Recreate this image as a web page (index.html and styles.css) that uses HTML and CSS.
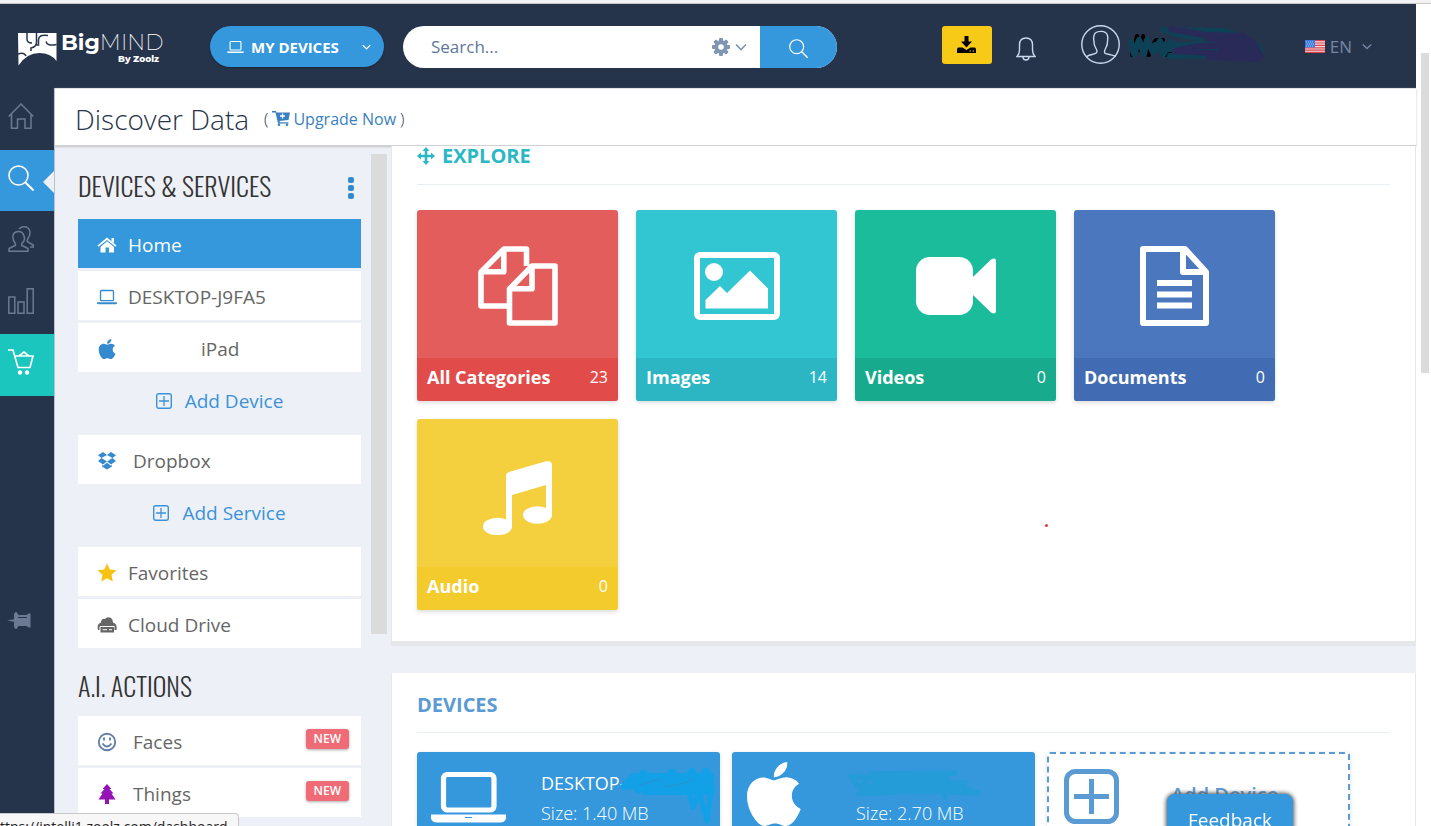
FILE: index.html
```html
<!DOCTYPE html>
<html lang="en">
<head>
<meta charset="utf-8">
<title>BigMIND - Discover Data</title>
<link rel="stylesheet" href="styles.css">
</head>
<body>
<svg class="defs" aria-hidden="true">
  <symbol id="chevron" viewBox="0 0 12 8"><path d="M1 1.5l5 5 5-5" fill="none" stroke="currentColor" stroke-width="1.6"/></symbol>
  <symbol id="laptop" viewBox="0 0 21 15"><rect x="3.7" y=".7" width="13.600" height="10.600" rx="1" fill="none" stroke="currentColor" stroke-width="1.400"/><path d="M0 13h21v1q0 1-2 1H2q-2 0-2-1z" fill="currentColor"/></symbol>
  <symbol id="search" viewBox="0 0 26 26"><circle cx="10.500" cy="10.500" r="9.500" fill="none" stroke="currentColor" stroke-width="1.600"/><path d="M17 17l8.500 8.500" stroke="currentColor" stroke-width="2"/></symbol>
  <symbol id="plusbox" viewBox="0 0 55 55"><rect x="2.500" y="2.500" width="50" height="50" rx="9" fill="none" stroke="currentColor" stroke-width="5"/><path d="M27.500 10v35M10 27.500h35" stroke="currentColor" stroke-width="5"/></symbol>
  <symbol id="plusthin" viewBox="0 0 16 16"><rect x=".7" y=".7" width="14.600" height="14.600" rx="2" fill="none" stroke="currentColor" stroke-width="1.400"/><path d="M8 3v10M3 8h10" stroke="currentColor" stroke-width="1.300"/></symbol>
  <symbol id="apple" viewBox="0 32 380 448"><path fill="currentColor" d="M318.700 268.700c-.2-36.700 16.400-64.400 50-84.800-18.800-26.900-47.200-41.700-84.700-44.600-35.500-2.800-74.300 20.700-88.500 20.700-15 0-49.400-19.700-76.400-19.700C63.300 141.200 4 184.800 4 273.500q0 39.300 14.400 81.200c12.800 36.700 59 126.700 107.200 125.200 25.200-.6 43-17.900 75.800-17.900 31.800 0 48.300 17.900 76.400 17.900 48.600-.7 90.400-82.500 102.600-119.300-65.200-30.700-61.700-90-61.700-91.900zm-56.600-164.200c27.300-32.400 24.800-61.900 24-72.500-24.100 1.400-52 16.400-67.900 34.900-17.500 19.800-27.800 44.300-25.600 71.900 26.100 2 49.900-11.400 69.500-34.300z"/></symbol>
</svg>

<div class="browser-edge"></div>
<div class="window">
  <div class="app">
    <header class="topbar">
      <a class="logo" href="#" aria-label="BigMIND by Zoolz">
        <svg class="logo-mark" viewBox="0 0 39 33" aria-hidden="true">
          <path fill="#fff" d="M0 0h38.500v28q-6-8-17-8-13 0-21 12.500z"/>
          <path d="M9 0v6q0 4 5 4M18.500 0v9q0 5-5.500 6v3M0 21q6-2 8 2M30 2.500q-9-1.500-9.500 4V12h-2M28 8.500q1 5 10.500 3" fill="none" stroke="#26344b" stroke-width="1.500"/>
        </svg>
        <span class="logo-text">
          <span class="logo-name"><b>Big</b>MIND</span>
          <span class="logo-by">By Zoolz</span>
        </span>
      </a>
      <button class="pill" type="button">
        <svg class="i-laptop" aria-hidden="true"><use href="#laptop"/></svg>
        <span>MY DEVICES</span>
        <svg class="chev" aria-hidden="true"><use href="#chevron"/></svg>
      </button>
      <form class="search">
        <input type="text" placeholder="Search..." aria-label="Search">
        <button class="search-opts" type="button" aria-label="Search options">
          <svg class="i-gear" viewBox="-9 -9 18 18" aria-hidden="true"><g fill="currentColor"><g id="tooth"><rect x="-2" y="-9" width="4" height="18" rx="1"/><rect x="-9" y="-2" width="18" height="4" rx="1"/></g><use href="#tooth" transform="rotate(45)"/><circle r="6.700"/></g><circle r="2.800" fill="#fff"/></svg>
          <svg class="chev" aria-hidden="true"><use href="#chevron"/></svg>
        </button>
        <button class="search-go" type="submit" aria-label="Search"><svg aria-hidden="true"><use href="#search"/></svg></button>
      </form>
      <button class="download" type="button" aria-label="Download">
        <svg viewBox="0 0 19 18" aria-hidden="true"><path d="M7.500 0h4v5.500H15l-5.500 6L4 5.500h3.500zM1 11.500h4.500l4 2.500 4-2.500H18l1 1.500v4H0v-4z"/><path d="M12.500 15h1.500M15.500 15h1.500" stroke="#f8ca18" stroke-width="1.200"/></svg>
      </button>
      <button class="bell" type="button" aria-label="Notifications">
        <svg viewBox="0 0 20 24" fill="none" stroke="#c9d7ea" stroke-width="1.400" aria-hidden="true"><path d="M1 19.500q2.500-2.500 2.500-6.500V8q0-7 6.500-7t6.500 7v5q0 4 2.500 6.500zM7 20q0 3 3 3t3-3"/></svg>
      </button>
      <button class="account" type="button" aria-label="Account">
        <svg class="avatar" viewBox="0 0 39 39" fill="none" stroke="#c9d7ea" stroke-width="1.400" aria-hidden="true"><circle cx="19.500" cy="19.500" r="18.700"/><path d="M5.500 32q1-1.500 5.500-2.500 5-1 5-3 0-1.500-1.500-4-1.500-2.500-1.500-6c0-1-1-3 0-6 1-5 12-6 13.500 0 .7 3 0 5 0 6 0 3.500-.5 4-1.500 6-1.500 3-1.500 3-1.500 4 0 2 0 2 5 3 4.500 1 5.500 1 6 2.500"/></svg>
        <svg class="scribble-name" viewBox="0 0 140 38" fill="none" stroke-linecap="round" stroke-linejoin="round" aria-hidden="true">
          <path stroke="#000" stroke-width="4" d="M5 29l5-19 3 14 3-14 5 16 8-12 8 15 12-2M30 14l6 0M22 29l-6-2"/>
          <path stroke="#0f4156" stroke-width="6" d="M4 16l3 12 5-14 5 14 3-14 6 12 7-11 3 14 8-13 5 13 20-12 25 3M36 4l62 1 20 8-60-3-15-4 30 3M28 19h102l4 6-8 8-65-4-18 1 80-2M28 23h60"/>
          <path stroke="#2a2a59" stroke-width="6" d="M44 3l34 6 38 1 12 9 6 12-50-4-36-2 24-5 50-1M80 12l40 5M82 31l48 2-36-9 36 2"/>
        </svg>
      </button>
      <button class="lang" type="button">
        <svg class="flag" viewBox="0 0 20 13" aria-hidden="true"><path fill="#f5dcdc" d="M0 0h20v13H0z"/><path stroke="#d8434e" stroke-width="1.200" d="M0 .6h20M0 3h20M0 5.400h20M0 7.800h20M0 10.200h20M0 12.400h20"/><path fill="#3c7be0" d="M0 0h10v7.500H0z"/><path stroke="#c8defa" stroke-width=".8" stroke-dasharray="1 1" d="M1 2h8M2 4h8M1 6h8"/></svg>
        <span>EN</span>
        <svg class="chev" aria-hidden="true"><use href="#chevron"/></svg>
      </button>
    </header>

    <div class="body">
      <nav class="rail" aria-label="Main">
        <div class="rail-items">
          <a href="#" aria-label="Home"><svg viewBox="0 0 26 26" fill="none" stroke="currentColor" stroke-width="1.500"><path d="M.7 13.500L13 1l12.300 12.500M3.500 11v14.200h6V16h7.500v9.200h6V11"/></svg></a>
          <a href="#" class="active" aria-label="Discover"><svg><use href="#search"/></svg></a>
          <a href="#" aria-label="Contacts"><svg viewBox="0 0 26 26" fill="none" stroke="currentColor" stroke-width="1.500"><path d="M1 25.200v-2.700l6-3q1-.5 0-2.500Q4.500 14 5 10t5-4.500 6 4.500-2 7q-.8 2 0 2.500l6 3v2.700zM11 3q2-2.200 5-2.200 5 0 6 5 .3 4-2.500 7.500-.8 2 .5 2.700l5.300 3v2H22"/></svg></a>
          <a href="#" aria-label="Statistics"><svg viewBox="0 0 26 26" fill="none" stroke="currentColor" stroke-width="1.500"><path d="M.8 9h6v16.200h-6zM10 14h6v11.200h-6zM19.200.8h6v24.400h-6z"/></svg></a>
          <a href="#" class="cart" aria-label="Shop"><svg viewBox="0 0 26 26" fill="none" stroke="currentColor" stroke-width="1.700"><path d="M0 1h5l5 17.500h12L25 7H7M11 7l5-4 5 4"/><g fill="currentColor" stroke="none"><circle cx="12" cy="23.500" r="2.200"/><circle cx="19" cy="23.500" r="2.200"/></g></svg></a>
        </div>
        <button class="pin" type="button" aria-label="Pin menu"><svg viewBox="0 0 24 17"><path fill="currentColor" d="M0 8.500l7-1.300V2l1.500-2 1 0 2 3h8l2-1.500h2v14h-2l-2-1.500h-8l-2 3-1 0L7 15V9.800z"/><path stroke="#26344b" d="M11 5.500h9"/></svg></button>
      </nav>

      <div class="page">
        <div class="titlebar">
          <h1>Discover Data</h1>
          <p class="upgrade">(
            <a href="#"><svg viewBox="0 0 18 15" aria-hidden="true"><path fill="currentColor" d="M0 0h4l.5 1.500H18L16.500 9l-9 1 .3 1.200h8.700v1.300H6L3.500 1.500H0z"/><circle cx="7" cy="13.700" r="1.300" fill="currentColor"/><circle cx="15" cy="13.700" r="1.300" fill="currentColor"/><path stroke="#fff" stroke-width="1.300" d="M10.500 2.500v5M8 5h5"/></svg>Upgrade Now</a>
          )</p>
        </div>

        <div class="columns">
          <aside class="side">
            <div class="side-list">
              <div class="side-head">
                <h2>DEVICES &amp; SERVICES</h2>
                <button class="dots" type="button" aria-label="More"><i></i><i></i><i></i></button>
              </div>
              <ul class="items">
                <li><a class="item selected" href="#"><svg class="ico" viewBox="0 0 20 20" aria-hidden="true"><path fill="currentColor" d="M10 2.500l9.500 8-1 1.200L10 5l-8.500 6.700-1-1.200zM14.500 3H17v5l-2.500-2zM10 6.200l7 5.700V17.500h-5v-5H8.500v5H3.500v-5.600z"/></svg>Home</a></li>
                <li><a class="item" href="#"><svg class="ico blue" aria-hidden="true"><use href="#laptop"/></svg>DESKTOP-J9FA5</a></li>
                <li><a class="item named" href="#"><svg class="ico blue" aria-hidden="true"><use href="#apple"/></svg>iPad</a></li>
              </ul>
              <button class="add" type="button"><svg aria-hidden="true"><use href="#plusthin"/></svg>Add Device</button>
              <ul class="items">
                <li><a class="item wide" href="#"><svg class="ico blue" viewBox="0 0 20 20" aria-hidden="true"><path fill="currentColor" d="M6 1l4 3-5.500 3L1 4.300zM14 1l-4 3 5.500 3L19 4.300zM1 10l3.500-3L10 10.500 6 13.500zM19 10l-3.500-3L10 10.500l4 3zM5 14l1 .7 4-3 4 3 1-.7v1.500l-5 3-5-3z"/></svg>Dropbox</a></li>
              </ul>
              <button class="add" type="button"><svg aria-hidden="true"><use href="#plusthin"/></svg>Add Service</button>
              <ul class="items">
                <li><a class="item" href="#"><svg class="ico gold" viewBox="0 0 20 20" aria-hidden="true"><path fill="currentColor" d="M10 .5l2.800 6 6.700.8-5 4.500 1.300 6.700-5.800-3.300-5.800 3.300 1.300-6.700-5-4.500 6.700-.8z"/></svg>Favorites</a></li>
                <li><a class="item" href="#"><svg class="ico" viewBox="0 0 20 20" aria-hidden="true"><path fill="currentColor" d="M1 15Q-.5 9 4 7.500 4.500 3 8 4q2-3 5.500-1.200Q16 4 16 7.500q4.500 1 3.500 7.500h-2v-3.500h-15V15zM3.500 12h13.500v5.500H3.500z"/><path stroke="#fff" stroke-width="1" d="M3 11.500h14.500M5.500 14.700H10M12 14.700h3"/></svg>Cloud Drive</a></li>
              </ul>
              <div class="side-head lower"><h2>A.I. ACTIONS</h2></div>
              <ul class="items">
                <li><a class="item wide" href="#"><svg class="ico slate" viewBox="0 0 20 20" fill="none" stroke="currentColor" stroke-width="1.900" aria-hidden="true"><circle cx="10" cy="10" r="8.200"/><path d="M5.500 11.500q4.500 6 9 0M7 5.500v3M13 5.500v3"/></svg>Faces<span class="badge">NEW</span></a></li>
                <li><a class="item wide" href="#"><svg class="ico purple" viewBox="0 0 20 20" aria-hidden="true"><path fill="currentColor" d="M10 0l4.500 5h-2l4 4.500h-2l4 6H12V20H8v-4.500H1.500l4-6h-2l4-4.500h-2z"/></svg>Things<span class="badge">NEW</span></a></li>
              </ul>
            </div>
            <div class="side-scroll"></div>
          </aside>

          <main class="main">
            <section class="panel explore">
              <h3><svg viewBox="0 0 18 18" aria-hidden="true"><path fill="currentColor" d="M9 0l3.500 4H10.300v3.700h3.700V5.500L18 9l-4 3.500v-2.200h-3.700V14h2.200L9 18l-3.500-4h2.200v-3.700H4v2.200L0 9l4-3.500v2.200h3.700V4H5.500z"/></svg>EXPLORE</h3>
              <div class="tiles">
                <a class="tile red" href="#">
                  <span class="art"><svg width="80" height="80" viewBox="0 0 80 80" fill="none" stroke="#fff" stroke-width="5.600" stroke-linejoin="round"><path d="M31 60H3V26L26 3H48.500V20M3 25.800H25.800V3M31.500 43L54 20H77V77H31.500ZM31.500 42.800H54V20"/></svg></span>
                  <span class="cap"><b>All Categories</b><span>23</span></span>
                </a>
                <a class="tile cyan" href="#">
                  <span class="art"><svg width="86" height="68" viewBox="0 0 86 68"><rect x="3" y="3" width="80" height="62" rx="3" fill="none" stroke="#fff" stroke-width="6"/><circle cx="20" cy="20" r="9" fill="#fff"/><path fill="#fff" d="M11.500 56.500V48L26 34l7 7 23-22.500 18 18v20z"/></svg></span>
                  <span class="cap"><b>Images</b><span>14</span></span>
                </a>
                <a class="tile green" href="#">
                  <span class="art"><svg width="80" height="58" viewBox="0 0 80 58" fill="#fff"><rect width="57" height="58" rx="14"/><path d="M57 20L75 2.500Q80 0 80 4V54Q80 58 75 55.500L57 38z"/></svg></span>
                  <span class="cap"><b>Videos</b><span>0</span></span>
                </a>
                <a class="tile indigo" href="#">
                  <span class="art"><svg width="69" height="80" viewBox="0 0 69 80" fill="none" stroke="#fff" stroke-width="6" stroke-linejoin="round"><path d="M3 3H45L66 26V77H3ZM43 3V26H66"/><path d="M17 37h35M17 48.500h35M17 59.500h35"/></svg></span>
                  <span class="cap"><b>Documents</b><span>0</span></span>
                </a>
                <a class="tile yellow" href="#">
                  <span class="art"><svg width="69" height="80" viewBox="0 -6 69 80" fill="#fff"><path d="M23 15q0-3 3-4L63 .3q6-1 6 4V54h-6V24L29 34v32h-6z"/><ellipse cx="14.500" cy="65.500" rx="14.500" ry="8.700"/><ellipse cx="54.500" cy="54" rx="14.500" ry="8.700"/></svg></span>
                  <span class="cap"><b>Audio</b><span>0</span></span>
                </a>
              </div>
              <i class="speck"></i>
            </section>

            <section class="panel devices">
              <h3>DEVICES</h3>
              <div class="cards">
                <a class="card" href="#">
                  <svg class="card-ico laptop-big" viewBox="0 0 75 51" aria-hidden="true"><rect x="12.500" y="2.500" width="50.500" height="35.500" rx="4" fill="none" stroke="#fff" stroke-width="5.200"/><path fill="#fff" d="M0 42.500h75v4q-1 4-6 4H6q-5 0-6-4z"/><path stroke="#3597dc" d="M34 45.500h7"/></svg>
                  <span class="card-text"><strong>DESKTOP-</strong><span>Size: 1.40 MB</span></span>
                  <svg class="scribble-a" viewBox="0 0 96 58" fill="none" stroke="#12a1e6" stroke-width="8" stroke-linecap="round" stroke-linejoin="round" aria-hidden="true"><path d="M5 19l8-8 5 11 5-15 15 14L52 6l8 18L72 5l6 18L86 5l5 17M8 18h79M15 10h75M25 24h62M30 15h55"/><path stroke-width="5" d="M68 22l5 18 6-16 8 30 4-30"/><path d="M20 18l18-6 7 8 20-4 8-4" stroke="#2f8fd3" stroke-width="1"/></svg>
                </a>
                <a class="card" href="#">
                  <svg class="card-ico apple-big" aria-hidden="true"><use href="#apple"/></svg>
                  <span class="card-text"><strong>&nbsp;</strong><span>Size: 2.70 MB</span></span>
                  <svg class="scribble-b" viewBox="0 0 140 30" fill="none" stroke="#239cd7" stroke-width="5" stroke-linecap="round" stroke-linejoin="round" aria-hidden="true"><path d="M3 6l10 12L24 4l84-1-80 9 90 1-103 6 100-2 16 6-60-2-60 3 40-5M4 7h40M12 16h90M16 9h84M96 22l2 5"/></svg>
                </a>
                <a class="card add-card" href="#">
                  <svg class="card-ico plus-big" aria-hidden="true"><use href="#plusbox"/></svg>
                  <span>Add Device</span>
                </a>
              </div>
            </section>
          </main>
        </div>
      </div>
    </div>
  </div>
  <div class="gutter"><div class="thumb"></div></div>
</div>
<button class="feedback" type="button">Feedback</button>
<div class="status">ttps://intelli1.zoolz.com/dashboard</div>
</body>
</html>
```

FILE: styles.css
```css
* { box-sizing: border-box; }
body {
  margin: 0;
  height: 100vh;
  overflow: hidden;
  display: flex;
  flex-direction: column;
  background: #fff;
  font-family: "Open Sans", "Noto Sans", sans-serif;
  font-size: 18px;
  color: #666;
}
a { color: inherit; text-decoration: none; }
button { border: 0; padding: 0; background: none; font: inherit; color: inherit; cursor: pointer; }
h1, h2, h3, p, ul { margin: 0; padding: 0; font-weight: 400; }
ul { list-style: none; }
svg { flex: none; display: block; }
.defs { position: absolute; width: 0; height: 0; }

.browser-edge { flex: none; height: 4px; background: #f3f3f3; border-bottom: 1px solid #c9c9c9; }
.window { flex: 1; min-height: 0; display: flex; }
.app { flex: 1; min-width: 0; display: flex; flex-direction: column; }
.gutter { width: 15px; padding: 49px 2px 0 5px; background: #fff; }
.thumb { height: 320px; background: #dbdbdb; }

/* top bar */
.topbar {
  flex: none;
  height: 84px;
  display: flex;
  align-items: center;
  padding: 1px 44px 0 18px;
  background: #26344b;
}
.logo { display: flex; gap: 4px; color: #fff; width: 192px; padding-top: 4px; }
.logo-mark { width: 39px; height: 33px; margin-top: 1px; }
.logo-text { display: flex; flex-direction: column; width: 98px; font-family: Montserrat, Inter, sans-serif; }
.logo-name { font-size: 22px; line-height: 22px; font-weight: 200; white-space: nowrap; }
.logo-name b { font-weight: 700; }
.logo-by { align-self: flex-end; font-size: 9px; line-height: 10px; font-weight: 800; }
.chev { width: 12px; height: 8px; }
.pill {
  display: flex;
  align-items: center;
  width: 174px;
  height: 41px;
  padding: 0 13px 0 17px;
  border-radius: 21px;
  background: #3597dc;
  color: #fff;
  font-size: 15px;
  font-weight: 700;
  box-shadow: 0 1px 2px #1a2538;
}
.pill span { flex: 1; text-align: left; padding-left: 7px; white-space: nowrap; }
.i-laptop { width: 17px; height: 12px; }
.pill .chev { width: 9px; height: 6px; }
.search {
  display: flex;
  flex: 0 1 434px;
  height: 42px;
  margin-left: 19px;
  border-radius: 21px;
  overflow: hidden;
  background: #fff;
}
.search input {
  flex: 1;
  min-width: 0;
  border: 0;
  outline: 0;
  padding: 0 0 0 28px;
  background: none;
  font: inherit;
  font-size: 17px;
}
.search input::placeholder { color: #5d789b; opacity: 1; }
.search-opts { display: flex; align-items: center; gap: 5px; padding-right: 13px; color: #7f95b1; }
.i-gear { width: 18px; height: 18px; }
.search-go { width: 77px; display: flex; align-items: center; justify-content: center; background: #3597dc; color: #fff; padding-top: 3px; }
.search-go svg { width: 19px; height: 19px; }
.download {
  width: 50px;
  height: 38px;
  margin: 0 24px 4px auto;
  display: flex;
  align-items: center;
  justify-content: center;
  border-radius: 3px;
  background: #f8ca18;
}
.download svg { width: 19px; height: 18px; }
.bell svg { width: 20px; height: 24px; }
.bell { margin-top: 4px; }
.account { display: flex; align-items: center; gap: 7px; margin: 0 38px 4px 45px; }
.avatar { width: 39px; height: 39px; }
.scribble-name { width: 140px; height: 38px; }
.lang { display: flex; align-items: center; gap: 5px; color: #7487a3; font-size: 17px; }
.lang .chev { width: 10px; height: 7px; margin-left: 5px; }
.flag { width: 20px; height: 13px; }

/* icon rail */
.body { flex: 1; min-height: 0; display: flex; background: #edf0f6; }
.rail { flex: none; width: 55px; background: #26344b; border-right: 1px solid #b9c1ce; color: #6b7a92; }
.rail-items { display: grid; grid-template-rows: repeat(5, 1fr); height: 308px; }
.rail a { position: relative; padding: 15px 8px; }
.rail-items svg { width: 26px; height: 26px; }
.rail .active { background: #3597dc; color: #fff; }
.rail .active::after {
  content: "";
  position: absolute;
  right: 0;
  top: 21px;
  border: 11px solid transparent;
  border-left-width: 0;
  border-right-color: #edf0f6;
}
.rail .cart { background: #1ac6be; color: #fff; }
.pin { margin: 216px 0 0 7px; }
.pin svg { width: 24px; height: 17px; }

/* page */
.page { flex: 1; min-width: 0; display: flex; flex-direction: column; }
.titlebar {
  position: relative;
  flex: none;
  height: 58px;
  display: flex;
  align-items: center;
  gap: 15px;
  padding: 3px 20px 0;
  background: #fff;
  color: #26344b;
  border-top: 1px solid #dcdfe4;
  border-bottom: 1px solid #cfd1d5;
  box-shadow: 0 1px 2px #c0c2c6;
}
h1 { font-size: 28px; line-height: 40px; font-weight: 300; }
.upgrade { display: flex; align-items: center; gap: 4px; font-size: 16px; font-weight: 300; }
.upgrade a { display: flex; align-items: center; gap: 3px; color: #3a7fc0; font-weight: 400; }
.upgrade svg { width: 18px; height: 15px; }
.columns { flex: 1; min-height: 0; display: flex; }

/* side list */
.side { flex: none; width: 336px; display: flex; padding-left: 23px; overflow: hidden; }
.side-list { width: 283px; font-size: 19px; }
.side-scroll { width: 16px; height: 480px; margin: 8px 0 0 10px; background: #dbdbdb; }
.side-head { display: flex; align-items: center; justify-content: space-between; height: 73px; padding-top: 7px; }
.side-head.lower { height: 68px; }
h2 { font-family: Oswald, "Liberation Sans Narrow", "Open Sans", sans-serif; font-size: 26px; line-height: 32px; font-weight: 300; color: #333; white-space: nowrap; }
.dots { display: flex; flex-direction: column; gap: 2px; padding: 3px 7px 0; }
.dots i { width: 6px; height: 6px; border-radius: 2px; background: #3589cf; }
.items { display: flex; flex-direction: column; gap: 3px; }
.item { display: flex; align-items: center; gap: 11px; height: 49px; padding: 3px 12px 0 19px; background: #fff; }
.item.selected { background: #3597dc; color: #fff; }
.item.wide { gap: 16px; }
.item.named { gap: 84px; }
.ico { width: 20px; height: 20px; }
.blue { color: #3589cf; }
.gold { color: #f5c211; }
.slate { color: #6480a8; }
.purple { color: #9413b3; }
.badge {
  margin: 0 0 6px auto;
  padding: 0 8px;
  border-radius: 3px;
  background: #ef6b75;
  color: #fff;
  font-size: 12px;
  line-height: 20px;
  font-weight: 600;
  box-shadow: 0 1px 3px #aaa;
}
.add { width: 100%; height: 63px; padding-bottom: 5px; display: flex; align-items: center; justify-content: center; gap: 13px; color: #3b92da; }
.add svg { width: 16px; height: 16px; }

/* main panels */
.main { flex: 1; min-width: 0; display: flex; flex-direction: column; gap: 27px; overflow: hidden; }
.panel {
  position: relative;
  flex: none;
  padding: 0 25px 31px;
  background: #fff;
  border: solid #e5e7ea;
  border-width: 0 1px 5px;
}
h3 { display: flex; align-items: center; gap: 7px; height: 39px; font-size: 20px; line-height: 24px; font-weight: 600; border-bottom: 1px solid #e9edf4; }
h3 svg { width: 18px; height: 18px; }
.explore h3 { color: #2cb7c5; padding-bottom: 18px; font-weight: 700; }
.tiles { display: flex; flex-wrap: wrap; gap: 18px; padding-top: 25px; }
.tile { width: 201px; border-radius: 3px; overflow: hidden; color: #fff; box-shadow: 0 2px 4px #ddd; }
.art { display: flex; align-items: center; justify-content: center; height: 148px; padding-top: 3px; }
.cap { display: flex; align-items: center; justify-content: space-between; height: 43px; padding: 0 10px 6px; font-size: 16px; }
.cap b { font-size: 18px; }
.red { background: #e45d5d; }
.red .cap { background: #e14b4a; }
.cyan { background: #32c5d2; }
.cyan .cap { background: #2cb6c4; }
.green { background: #1bbc9b; }
.green .cap { background: #18aa8c; }
.indigo { background: #4b77be; }
.indigo .cap { background: #416cb4; }
.yellow { background: #f4d03f; }
.yellow .cap { background: #f3cb2c; }
.speck { position: absolute; right: 367px; bottom: 114px; width: 3px; height: 3px; border-radius: 2px; background: #e33; }

.devices h3 { height: 60px; padding-top: 4px; color: #5b9bd3; font-weight: 700; }
.cards { display: flex; flex-wrap: wrap; gap: 12px; padding-top: 19px; }
.card {
  position: relative;
  display: flex;
  width: 303px;
  height: 112px;
  border-radius: 3px;
  background: #3597dc;
  color: #fff;
  box-shadow: 0 1px 4px #ddd;
}
.laptop-big { width: 75px; height: 51px; margin: 20px 35px 0 14px; }
.apple-big { width: 55px; height: 64px; margin: 10px 55px 0 14px; }
.card-text { display: flex; flex-direction: column; gap: 3px; padding-top: 18px; font-size: 18px; line-height: 27px; font-weight: 300; }
.card-text strong { font-size: 18px; font-weight: 400; }
.scribble-a { position: absolute; left: 203px; top: 15px; width: 96px; height: 58px; }
.scribble-b { position: absolute; left: 115px; top: 18px; width: 140px; height: 30px; }
.add-card { background: #fff; border: 2px dashed #5b9bd3; color: #5b9bd3; font-size: 20px; font-weight: 600; line-height: 28px; gap: 52px; padding: 15px; }
.add-card span { padding-top: 12px; }
.plus-big { width: 55px; height: 55px; }

/* overlays */
.feedback {
  position: fixed;
  right: 138px;
  bottom: -20px;
  width: 126px;
  height: 52px;
  border-radius: 8px;
  background: #3597dc;
  color: #fff;
  font-size: 19px;
  box-shadow: 0 0 4px 1px #555;
}
.status {
  position: fixed;
  left: 0;
  bottom: -12px;
  width: 239px;
  height: 25px;
  padding-top: 3px;
  overflow: hidden;
  white-space: nowrap;
  background: #f7f7f7;
  border: 1px solid #c8c8c8;
  border-left: 0;
  border-radius: 0 4px 0 0;
  color: #222;
  font-size: 14px;
  line-height: 20px;
}
```
